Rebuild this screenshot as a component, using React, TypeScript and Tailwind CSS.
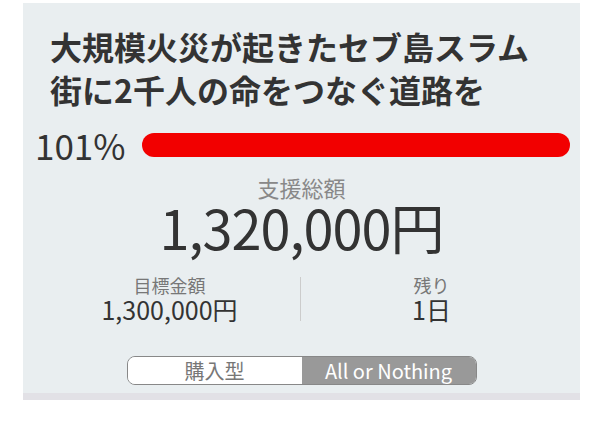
import React from 'react';

const FONT = { fontFamily: '"Noto Sans CJK JP", "Noto Sans", sans-serif' };

function Stat({ label, value }: { label: string; value: string }): React.ReactElement {
  return (
    <div className="flex flex-1 flex-col items-center">
      <div className="text-[18px] leading-[20px] text-[#777]">{label}</div>
      <div className="text-[25px] leading-[28px] text-[#333]">{value}</div>
    </div>
  );
}

export default function App(): React.ReactElement {
  return (
    <div className="h-[422px] w-[610px] bg-white pt-[3px]" style={FONT}>
      <div className="ml-[23px] w-[557px] bg-[#e9eef0] border-b-[7px] border-[#e2e1e6]">
        <h1 className="px-[27px] pt-[22px] text-[32px] font-bold leading-[43px] text-[#333]">
          大規模火災が起きたセブ島スラム街に2千人の命をつなぐ道路を
        </h1>
        <div className="mt-[14px] flex items-center gap-[16px] pl-[12px] pr-[10px]">
          <span className="text-[35px] leading-[40px] text-[#333]">101%</span>
          <div className="h-[24px] flex-1 rounded-full bg-[#f20000]" />
        </div>
        <div className="mt-[8px] flex flex-col items-center">
          <div className="text-[22px] leading-[28px] text-[#888]">支援総額</div>
          <div className="text-[54px] leading-[52px] tracking-[-1px] text-[#333]">1,320,000円</div>
        </div>
        <div className="mt-[22px] flex items-center pl-[16px] pr-[18px]">
          <Stat label="目標金額" value="1,300,000円" />
          <div className="h-[44px] w-px bg-[#ccc]" />
          <Stat label="残り" value="1日" />
        </div>
        <div className="flex justify-center pt-[33px] pb-[8px]">
          <div className="flex h-[29px] w-[350px] overflow-hidden rounded-[8px] border border-[#888]">
            <div className="flex flex-1 items-center justify-center bg-white text-[20px] text-[#777]">購入型</div>
            <div className="flex flex-1 items-center justify-center bg-[#999] text-[20px] text-white">All or Nothing</div>
          </div>
        </div>
      </div>
    </div>
  );
}
